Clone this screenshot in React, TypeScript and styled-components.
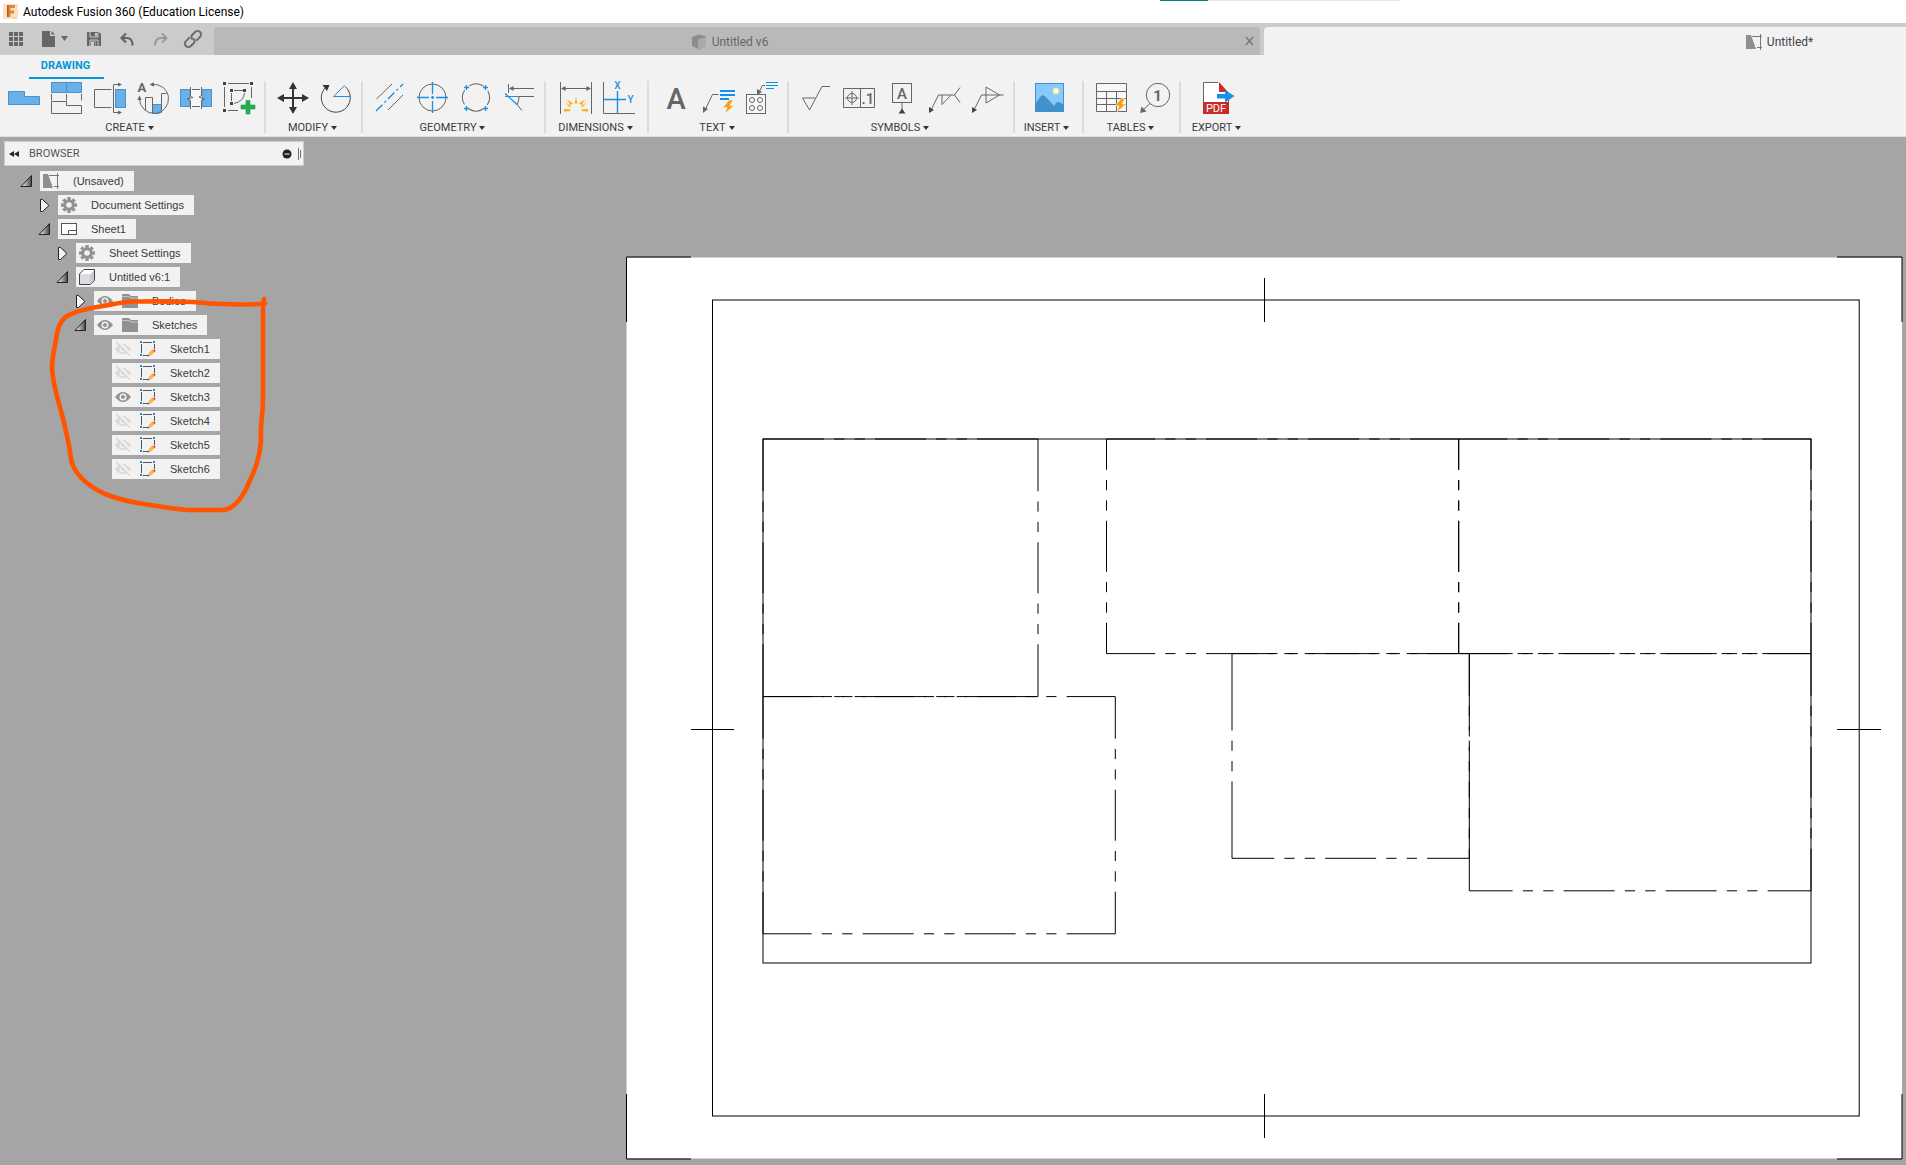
import React from "react";
import styled, { createGlobalStyle } from "styled-components";

const UI_FONT = `Roboto, "Liberation Sans", sans-serif`;
const TREE_FONT = `"Liberation Sans", Arial, sans-serif`;

const GlobalStyle = createGlobalStyle`
  * { box-sizing: border-box; }
  body { margin: 0; background: #a5a5a5; font-family: ${UI_FONT}; color: #3c3c3c; overflow: hidden; }
  button { border: 0; margin: 0; padding: 0; background: none; font: inherit; color: inherit; cursor: pointer; }
  ul { list-style: none; margin: 0; padding: 0; }
  h1, h2 { margin: 0; font-weight: 400; }
  svg { display: block; overflow: visible; }
`;

const Page = styled.div`
  display: flex;
  flex-direction: column;
  min-height: 100vh;
`;

const TitleBar = styled.header`
  position: relative;
  display: flex;
  align-items: center;
  gap: 4px;
  height: 23px;
  padding-left: 3px;
  background: #fff;
`;

const AppTitle = styled.h1`
  font-size: 12px;
  line-height: 16px;
  color: #000;
`;

const LoadStrip = styled.div`
  position: absolute;
  top: 0;
  left: calc(61% - 3px);
  width: 240px;
  height: 1px;
  background: linear-gradient(to right, #0e8080 20%, #e5e5e5 20%);
`;

const QuickBar = styled.div`
  display: flex;
  height: 32px;
  background: #cbcbcb;
`;

const QuickTools = styled.div`
  display: flex;
  flex: none;
  align-items: center;
  width: 214px;
  padding-left: 8px;
`;

const QuickButton = styled.button<{ $width: number }>`
  display: flex;
  align-items: center;
  width: ${(p) => p.$width}px;
  height: 20px;
`;

const Tabs = styled.div`
  display: flex;
  flex: 1;
  gap: 4px;
  min-width: 0;
  padding-top: 4px;
  overflow: hidden;
`;

const Tab = styled.div<{ $active?: boolean }>`
  display: flex;
  flex: 0 0 calc(62% - 3px);
  align-items: center;
  padding-right: 5px;
  border-radius: 4px 4px 0 0;
  background: ${(p) => (p.$active ? "#f2f2f2" : "#b9b9b9")};
`;

const TabName = styled.button<{ $active?: boolean }>`
  display: flex;
  flex: 1;
  align-items: center;
  justify-content: center;
  gap: 5px;
  height: 28px;
  padding-top: 1px;
  font-size: 12px;
  color: ${(p) => (p.$active ? "#444" : "#666")};
`;

const TabClose = styled.button`
  width: 10px;
  height: 16px;
`;

const Ribbon = styled.section`
  display: flex;
  flex-direction: column;
  height: 82px;
  background: #f2f2f2;
  border-bottom: 1px solid #dcdfdf;
`;

const RibbonTab = styled.button`
  width: 75px;
  height: 24px;
  margin-left: 29px;
  padding-right: 2px;
  border-bottom: 2px solid #0696d7;
  font-size: 11px;
  font-weight: 700;
  line-height: 22px;
  color: #0696d7;
`;

const Groups = styled.div`
  display: flex;
  height: 54px;
  padding-top: 2px;
`;

const Group = styled.div<{ $width?: number; $first?: boolean; $tight?: boolean }>`
  display: flex;
  flex-direction: column;
  align-items: center;
  min-width: ${(p) => p.$width ?? 0}px;
  height: 52px;
  padding: ${(p) => (p.$tight ? "0 8px" : p.$first ? "0 9px 0 8px" : "0 9px 0 11px")};
  border-right: 2px solid #dcdcdc;
  &:last-child { border-right: 0; }
`;

const GroupIcons = styled.div`
  display: flex;
  gap: 11px;
  padding-top: 1px;
`;

const Tool = styled.button`
  width: 32px;
  height: 32px;
`;

const GroupLabel = styled.button`
  display: flex;
  align-items: center;
  gap: 3px;
  padding-right: 4px;
  margin-top: 6px;
  font-size: 11px;
  line-height: 16px;
  white-space: nowrap;
  color: #3c3c3c;
`;

const Caret = styled.span`
  border: 3px solid transparent;
  border-top: 4px solid #333;
  border-bottom: 0;
`;

const Workspace = styled.main`
  position: relative;
  display: grid;
  flex: 1;
  grid-template-columns: minmax(304px, 624px) 1fr;
  align-items: start;
  background: #a5a5a5;
`;

const BrowserPanel = styled.aside`
  width: 304px;
  padding: 4px 0 0 4px;
`;

const BrowserHeader = styled.div`
  display: flex;
  align-items: center;
  height: 25px;
  padding: 0 1px 0 4px;
  background: #f2f2f2;
  border: 1px solid #cdcdcd;
`;

const BrowserTitle = styled.h2`
  flex: 1;
  padding-left: 10px;
  font-size: 11px;
  line-height: 16px;
  color: #555;
`;

const HeaderButton = styled.button`
  display: flex;
  padding: 0 0 0 6px;
  &:first-child { padding: 0; }
`;

const TreeList = styled.ul`
  display: flex;
  flex-direction: column;
  gap: 4px;
  padding-top: 5px;
`;

const TreeRow = styled.li<{ $depth: number }>`
  display: flex;
  height: 20px;
  padding-left: ${(p) => 12 + p.$depth * 18}px;
`;

const Twisty = styled.button`
  display: flex;
  align-items: center;
  width: 24px;
`;

const Chip = styled.div`
  display: flex;
  align-items: center;
  gap: 9px;
  padding: 0 10px 0 3px;
  background: #f2f2f2;
`;

const IconButton = styled.button`
  width: 16px;
  height: 16px;
`;

const NodeLabel = styled.button`
  display: flex;
  align-items: center;
  gap: 14px;
  height: 20px;
  font-family: ${TREE_FONT};
  font-size: 11px;
  line-height: 20px;
  color: #3a3a3a;
  white-space: nowrap;
`;

const Canvas = styled.div`
  padding-top: 119px;
  svg { width: 100%; height: auto; }
`;

const Markup = styled.svg`
  position: absolute;
  top: 153px;
  left: 48px;
  pointer-events: none;
`;

/* ---------- icons ---------- */

const G = "#666";
const B = "#1a8fe3";

const Svg = ({ w = 32, h = w, children }: { w?: number; h?: number; children: React.ReactNode }) => (
  <svg width={w} height={h} viewBox={`0 0 ${w} ${h}`} fill="none" stroke={G} aria-hidden="true">
    {children}
  </svg>
);

const Bolt = ({ x, y }: { x: number; y: number }) => (
  <path
    transform={`translate(${x} ${y})`}
    d="M6 0L0 7.5H4L2 13.5L11 5.5H7L10 0Z"
    fill="#f9a010"
    stroke="#f2f2f2"
    strokeWidth=".6"
  />
);

const icons: Record<string, React.ReactNode> = {
  baseView: <path d="M.5 9.5H16.5V14.5H31.5V22.5H.5Z" fill="#69b0e8" stroke="#4b90c6" />,
  projected: (
    <>
      <path d="M.5.5H30.5V10.5H.5ZM15.5.5V10.5" fill="#69b0e8" stroke="#4b90c6" />
      <path d="M.5 12V18.5M15.5 12V18.5M30.5 12V18.5M.5 19.5H15.5V23.5H30.5V31.5H.5Z" />
    </>
  ),
  section: (
    <>
      <path d="M17.5 7.5H.5V25.5H17.5M25 2.5H19.5V30.5H25" />
      <path d="M24 .5L28 2.5L24 4.5ZM24 28.5L28 30.5L24 32.5Z" fill={G} stroke="none" />
      <rect x="21.5" y="7.5" width="10" height="18" fill="#69b0e8" stroke="#4b90c6" />
    </>
  ),
  detail: (
    <>
      <text x="0.5" y="10" fontFamily={UI_FONT} fontWeight="700" fontSize="13" fill={G} stroke="none">A</text>
      <path d="M15.5 22.5H24.5V30.5Q20 32.5 15.5 31Z" fill="#69b0e8" stroke="#4b90c6" />
      <path d="M15 2.5A14.5 14.5 0 1 1 2.5 17M8.5 28V15.5H15.5V31.5M24.5 30V11.5H29.5" />
      <path d="M12.5 2.5L17 .3V4.7ZM2.5 13.5L.3 18H4.7Z" fill={G} stroke="none" />
    </>
  ),
  breakView: (
    <>
      <path d="M.5 7.5H10V15L8 17L10 19V24.5H.5ZM31.5 7.5H22V24.5H31.5Z" fill="#69b0e8" stroke="#4b90c6" />
      <path d="M10.5 7.5H21.5V24.5H10.5Z" fill="#f7f7f7" stroke="none" />
      <path d="M12 7.5H20M12 24.5H20" />
      <path d="M10.5 5V14.5L13 15.5L7.5 17L10.5 18.5V27M21.5 5V13.5L19 15L24.5 17L21.5 18.5V27" />
    </>
  ),
  sketch: (
    <>
      <path d="M5 1.5H26M1.5 5V25M28.5 5V16M5 28.5H15M11 8.5H20M8.5 11V19M21.5 11Q21 19 11 21.5" />
      <path d="M0 0H3V3H0ZM27 0H30V3H27ZM0 27H3V30H0ZM7 7H10V10H7ZM20 7H23V10H20ZM7 20H10V23H7Z" fill="#444" stroke="none" />
      <path d="M23 18.5H27V23H32V27H27V32H23V27H18V23H23Z" fill="#22b050" stroke="#1a9a44" strokeWidth=".6" />
    </>
  ),
  move: (
    <>
      <path d="M16 5V27M5 16H27" stroke="#333" strokeWidth="2" />
      <path d="M16 0L20 7H12ZM16 32L20 25H12ZM0 16L7 12V20ZM32 16L25 12V20Z" fill="#333" stroke="none" />
    </>
  ),
  rotate: (
    <>
      <path d="M25 4.5A14.5 14.5 0 1 1 6 5" stroke="#444" />
      <path d="M2.5 3H9.5L7 9Z" fill="#333" stroke="none" />
      <path d="M24.5 3.5L13.5 14.5H31" stroke={B} />
    </>
  ),
  centerline: (
    <>
      <path d="M2.5 17L18 2M14 28L29 13" />
      <path d="M2 29L29 2" stroke={B} strokeWidth="1.4" strokeDasharray="9 3 2 3" />
    </>
  ),
  centermark: (
    <>
      <circle cx="15.5" cy="15.5" r="13.5" />
      <path d="M15.5 0V12M15.5 14V17M15.5 19V31M0 15.5H12M14 15.5H17M19 15.5H31" stroke={B} strokeWidth="1.3" />
    </>
  ),
  centerPattern: (
    <>
      <circle cx="16" cy="15.5" r="13.5" strokeDasharray="14.7 6.5" strokeDashoffset="-3.25" transform="rotate(45 16 15.5)" />
      <path d="M4 5.5H9M6.5 3V8M23 5.5H28M25.5 3V8M4 26.5H9M6.5 24V29M23 26.5H28M25.5 24V29" stroke={B} strokeWidth="1.3" />
    </>
  ),
  edgeExt: (
    <>
      <path d="M5.5 2V11M7 6.5H31M14 14.5H31M14 22.5L19 28.5M16 15Q16 19 14 23" />
      <path d="M6 6.5L10.5 4V9Z" fill={G} stroke="none" />
      <path d="M2 14.5H15M2 11.5L14 22.5" stroke={B} strokeWidth="1.2" />
    </>
  ),
  dimension: (
    <>
      <path d="M.5 0V32M31.5 0V32M3 6.5H29" />
      <path d="M1 6.5L5.5 4V9ZM31 6.5L26.5 4V9Z" fill={G} stroke="none" />
      <path d="M16 15L14.500 21.500H17.500ZM7 17.500L10.500 23L13 21.500ZM25 17.500L21.500 23L19 21.500ZM4 27V29.500L10.500 29V27.500ZM28 27V29.500L21.500 29V27.500ZM5 20L10 25.500L11 24ZM27 20L22 25.500L21 24Z" fill="#ffae00" stroke="none" />
    </>
  ),
  ordinate: (
    <>
      <path d="M.5 0V31.5H32" />
      <path d="M14.5 9V31M1 17.5H23" stroke={B} strokeWidth="1.4" />
      <text x="14.5" y="7" textAnchor="middle" fontFamily={UI_FONT} fontWeight="500" fontSize="10" fill={B} stroke="none">X</text>
      <text x="27.5" y="20.5" textAnchor="middle" fontFamily={UI_FONT} fontWeight="500" fontSize="10" fill={B} stroke="none">Y</text>
    </>
  ),
  text: (
    <text x="16" y="27" textAnchor="middle" fontFamily={UI_FONT} fontWeight="500" fontSize="29" fill={G} stroke="none">A</text>
  ),
  leader: (
    <>
      <path d="M2 28L9.5 12.5H15.5" />
      <path d="M0 31V24.5L5 27Z" fill={G} stroke="none" />
      <path d="M17 9H32M17 13H32M17 17H26" stroke="#1290f0" strokeWidth="2" />
      <Bolt x={20} y={18} />
    </>
  ),
  holeNote: (
    <>
      <rect x=".5" y="12.5" width="19" height="19" fill="#f7f7f7" />
      <circle cx="6" cy="18" r="2.5" /><circle cx="14" cy="18" r="2.5" />
      <circle cx="6" cy="26" r="2.5" /><circle cx="14" cy="26" r="2.5" />
      <path d="M13 10L16.5 3.5H19" />
      <path d="M11 13V7L16 10Z" fill={G} stroke="none" />
      <path d="M20 .5H32M20 3.5H32M20 6.5H28" stroke="#0696d7" />
    </>
  ),
  surface: <path d="M15 16H2.5L9.5 28L22 4.5H30" />,
  frame: (
    <>
      <path d="M.5 6.5H31.5V25.5H.5ZM17.5 6.5V25.5M9 9V23M2 16H16" />
      <circle cx="9" cy="16" r="4.5" />
      <text x="18.5" y="22" fontFamily={UI_FONT} fontWeight="500" fontSize="15" fill={G} stroke="none">.1</text>
    </>
  ),
  datum: (
    <>
      <rect x="6.5" y="1.5" width="19" height="19" />
      <text x="16" y="17" textAnchor="middle" fontFamily={UI_FONT} fontWeight="500" fontSize="15" fill={G} stroke="none">A</text>
      <path d="M16 20.5V28" />
      <path d="M12.5 31.5L16 26.5L19.5 31.5Z" fill="#444" stroke="none" />
    </>
  ),
  weld: (
    <>
      <path d="M2 28L9.5 13H25.5L31 5.5M25.5 13L31 20.5M13 13V22.5L22 13" />
      <path d="M0 31V25L5 28Z" fill="#444" stroke="none" />
    </>
  ),
  taper: (
    <>
      <path d="M2 28L9.5 13H31.5M14 5V21L27.5 13Z" />
      <path d="M0 31V25L5 28Z" fill="#444" stroke="none" />
    </>
  ),
  image: (
    <>
      <rect x="2.5" y="1.5" width="28" height="28" fill="#87cbfd" stroke="#4192cc" />
      <path d="M2 22L8 14Q10 12 13 15L21 24L23 21Q26 18 30.5 23V29.5H2Z" fill="#4192cc" stroke="none" />
      <circle cx="23" cy="9" r="3" fill="#ffffd2" stroke="#f5e79a" />
    </>
  ),
  table: (
    <>
      <path d="M1.5 1.5H31.5V29.5H1.5ZM1.5 9.5H31.5M1.5 16.5H31.5M1.5 22.5H31.5M11.5 9.5V29.5M21.5 9.5V29.5" fill="#f7f7f7" />
      <Bolt x={20} y={16.5} />
    </>
  ),
  balloon: (
    <>
      <circle cx="20" cy="13" r="11.7" />
      <text x="19.5" y="18.5" textAnchor="middle" fontFamily={UI_FONT} fontWeight="700" fontSize="15" fill={G} stroke="none">1</text>
      <path d="M12 21.5L5 28" />
      <path d="M2 31L3.5 24.5L8.5 29.5Z" fill={G} stroke="none" />
    </>
  ),
  pdf: (
    <>
      <path d="M15 .5H.5V20.5H25.5V14" fill="#fff" />
      <path d="M16 0L25 10H16Z" fill="#cf2a2a" stroke="none" />
      <rect x="0" y="20" width="26" height="12" fill="#c92a2a" stroke="none" />
      <path d="M14 12H22V8L31.5 14L22 20.5V16.5H14Z" fill="#1a8fe3" stroke="none" />
      <text x="13" y="30" textAnchor="middle" fontFamily={UI_FONT} fontSize="11" fill="#fff" stroke="none">PDF</text>
    </>
  ),
};

const groups: { name: string; width?: number; tight?: boolean; tools: [string, string][] }[] = [
  { name: "CREATE", tools: [["baseView", "Base view"], ["projected", "Projected view"], ["section", "Section view"], ["detail", "Detail view"], ["breakView", "Break view"], ["sketch", "Create sketch"]] },
  { name: "MODIFY", tools: [["move", "Move"], ["rotate", "Rotate"]] },
  { name: "GEOMETRY", tools: [["centerline", "Centerline"], ["centermark", "Center mark"], ["centerPattern", "Center mark pattern"], ["edgeExt", "Edge extension"]] },
  { name: "DIMENSIONS", width: 103, tools: [["dimension", "Dimension"], ["ordinate", "Ordinate dimension"]] },
  { name: "TEXT", tools: [["text", "Text"], ["leader", "Leader"], ["holeNote", "Hole and thread note"]] },
  { name: "SYMBOLS", tools: [["surface", "Surface texture"], ["frame", "Feature control frame"], ["datum", "Datum identifier"], ["weld", "Welding"], ["taper", "Taper and slope"]] },
  { name: "INSERT", tight: true, width: 69, tools: [["image", "Insert image"]] },
  { name: "TABLES", tools: [["table", "Table"], ["balloon", "Balloon"]] },
  { name: "EXPORT", tight: true, width: 75, tools: [["pdf", "Export PDF"]] },
];

const DrawingIcon = () => (
  <Svg w={16}>
    <path d="M0 1H5L10 15H0Z" fill="#8d8f93" stroke="none" />
    <path d="M6 2.5H16M14.5 0V16M11 13.5H16" stroke="#777" />
  </Svg>
);

const CubeIcon = () => (
  <Svg w={16}>
    <path d="M1 3L8 .5L15 2.5V12L8 15.5L1 12Z" fill="#8c8c8c" stroke="none" />
    <path d="M7 5.5L15 3V12L7 15.5Z" fill="#a9a9a9" stroke="none" />
  </Svg>
);

const Eye = ({ off }: { off?: boolean }) => (
  <Svg w={16}>
    <g stroke="none" fill={off ? "#d9d9d9" : "#929292"}>
      <path d="M0 8Q8-2 16 8Q8 18 0 8Z" />
      <circle cx="8" cy="8" r="3.5" fill="#f2f2f2" />
      <circle cx="8" cy="8" r="2" />
    </g>
    {off && (
      <>
        <path d="M3 .5L16 13.5" stroke="#f2f2f2" strokeWidth="2" />
        <path d="M1.5 1.5L14.5 14.5" stroke="#d5d5d5" strokeWidth="1.5" />
      </>
    )}
  </Svg>
);

const gearTeeth = [0, 45, 90, 135, 180, 225, 270, 315];

const nodeIcons: Record<string, React.ReactNode> = {
  drawing: <DrawingIcon />,
  gear: (
    <Svg w={16}>
      <circle cx="8" cy="8" r="4.3" stroke="#929292" strokeWidth="3" />
      {gearTeeth.map((a) => (
        <rect key={a} x="6.3" y="0" width="3.4" height="4" fill="#929292" stroke="none" transform={`rotate(${a} 8 8)`} />
      ))}
    </Svg>
  ),
  sheet: (
    <Svg w={16}>
      <rect x=".5" y="2.5" width="15" height="11" fill="#fff" stroke="#555" />
      <path d="M7.5 13V9.5H15" stroke="#555" />
    </Svg>
  ),
  body: (
    <Svg w={16}>
      <path d="M.5 5L5 .5H15.5V11.5L11 15.5H.5Z" fill="#fff" stroke="#444" strokeLinejoin="round" />
      <path d="M1 5H11V15H1Z" fill="#dcdde2" stroke="none" />
      <path d="M11 5.5L15 1.5V11.5L11 15Z" fill="#c9cad0" stroke="none" />
    </Svg>
  ),
  folder: (
    <Svg w={16}>
      <path d="M0 1H7L9 3H16V15H0Z" fill="#929292" stroke="none" />
      <path d="M0 3.5H7L9 5H16" stroke="#c4c4c4" />
    </Svg>
  ),
  sketch: (
    <Svg w={16}>
      <path d="M3 1.5H12M1.5 3V12M14.5 3V8M3 14.5H8" stroke="#555" />
      <path d="M0 0H2V2H0ZM13 0H15V2H13ZM0 13H2V15H0Z" fill={B} stroke="none" />
      <path d="M9.5 13.5L14 9.5" stroke="#fcb53b" strokeWidth="3.5" />
      <path d="M13.5 9L15 10.5" stroke="#ef4444" strokeWidth="2" />
      <path d="M8 13L10 15L8 15.5Z" fill="#666" stroke="none" />
    </Svg>
  ),
};

type Node = { label: string; depth: number; icon: string; open?: boolean; eye?: "on" | "off" };

const nodes: Node[] = [
  { label: "(Unsaved)", depth: 0, icon: "drawing", open: true },
  { label: "Document Settings", depth: 1, icon: "gear", open: false },
  { label: "Sheet1", depth: 1, icon: "sheet", open: true },
  { label: "Sheet Settings", depth: 2, icon: "gear", open: false },
  { label: "Untitled v6:1", depth: 2, icon: "body", open: true },
  { label: "Bodies", depth: 3, icon: "folder", open: false, eye: "on" },
  { label: "Sketches", depth: 3, icon: "folder", open: true, eye: "on" },
  ...[1, 2, 3, 4, 5, 6].map((n): Node => ({
    label: `Sketch${n}`, depth: 4, icon: "sketch", eye: n === 3 ? "on" : "off",
  })),
];

const TwistyIcon = ({ open }: { open: boolean }) => (
  <Svg w={16} h={14}>
    <defs>
      <linearGradient id="twistyShade" x1="0" x2="1">
        <stop offset=".2" stopColor="#ddd" />
        <stop offset="1" stopColor="#444" />
      </linearGradient>
    </defs>
    {open ? (
      <path d="M5 12.5L15.5 1.5V12.5Z" fill="url(#twistyShade)" stroke="#222" />
    ) : (
      <path d="M6.500 1.500H8.500L15 7.500L8.500 13.500H6.500Z" fill="#f4f4f4" stroke="#222" />
    )}
  </Svg>
);

/* ---------- sheet drawing ---------- */

/* Phantom line: long dash, two short ones, balanced so both ends finish alike. */
function phantomDash(length: number) {
  const repeats = Math.floor((length - 2) / 102);
  const end = (length - 102 * repeats + 51) / 2;
  const dashes: number[] = [end];
  for (let i = 0; i < repeats; i++) {
    dashes.push(10.2, 10.2, 10.2, 10.2, 10.2, i === repeats - 1 ? end : 51);
  }
  return [...dashes, 0].join(" ");
}

const PhantomRect = ({ x1, y1, x2, y2 }: { x1: number; y1: number; x2: number; y2: number }) => (
  <>
    {[[x1, y1, x2, y1], [x1, y2, x2, y2], [x1, y1, x1, y2], [x2, y1, x2, y2]].map(([a, b, c, d], i) => (
      <line key={i} x1={a} y1={b} x2={c} y2={d} strokeDasharray={phantomDash(c - a + d - b)} />
    ))}
  </>
);

const parts = [
  { x1: 763, y1: 439, x2: 1038, y2: 696.6 },
  { x1: 763, y1: 696.6, x2: 1115.3, y2: 933.8 },
  { x1: 1106.5, y1: 439, x2: 1458.7, y2: 653.6 },
  { x1: 1458.7, y1: 439, x2: 1811, y2: 653.6 },
  { x1: 1232, y1: 653.6, x2: 1469.3, y2: 858.3 },
  { x1: 1469.3, y1: 653.6, x2: 1811, y2: 890.8 },
];

const SheetDrawing = () => (
  <svg viewBox="624 256 1282 909" fill="none" stroke="#000" role="img" aria-label="Sheet1">
    <rect x="626.5" y="257.5" width="1275.5" height="901" fill="#fff" stroke="none" />
    <path d="M691 257H626.5V322M1837 257H1902V322M626.5 1094V1159H691M1902 1094V1159H1837" />
    <rect x="712.5" y="300" width="1146.7" height="816" />
    <path d="M1264.5 278V322M1264.5 1094V1138M691 729.5H734M1837 729.5H1881" />
    <rect x="763" y="439" width="1048" height="524" />
    {parts.map((p, i) => <PhantomRect key={i} {...p} />)}
  </svg>
);

export default function App() {
  return (
    <Page>
      <GlobalStyle />
      <TitleBar>
        <Svg w={16}>
          <rect x="0" y="0" width="15" height="15" fill="#fbe0c6" stroke="none" />
          <path d="M4 1H12V4H7.500V6.500H11V9.500H7.500V13H4Z" fill="#e2873a" stroke="none" />
          <path d="M4 1H5.500V13H4Z" fill="#b55e1c" stroke="none" />
          <path d="M9 13.500H13" stroke="#f3c79c" />
        </Svg>
        <AppTitle>Autodesk Fusion 360 (Education License)</AppTitle>
        <LoadStrip />
      </TitleBar>

      <QuickBar>
        <QuickTools>
          <QuickButton $width={33} aria-label="Data panel">
            <Svg w={16}>
              <path d="M1 3H15M1 8H15M1 13H15" strokeWidth="4" strokeDasharray="4 1" />
            </Svg>
          </QuickButton>
          <QuickButton $width={46} aria-label="File">
            <Svg w={28} h={16}>
              <path d="M1 0H9V5H14V16H1Z" fill={G} stroke="none" />
              <path d="M10.5 0L14 3.5H10.5Z" fill={G} stroke="none" />
              <path d="M20 5H27L23.5 10Z" fill={G} stroke="none" />
            </Svg>
          </QuickButton>
          <QuickButton $width={33} aria-label="Save">
            <Svg w={16}>
              <path d="M0 1H12L14 3V15H0Z" fill={G} stroke="none" />
              <path d="M3 1V6H11V1M3 15V9H11V15" stroke="#cbcbcb" />
              <path d="M8 2H10V5H8ZM4 10.5H9V15H4Z" fill="#cbcbcb" stroke="none" />
              <path d="M7 11H8.5V15H7Z" fill={G} stroke="none" />
            </Svg>
          </QuickButton>
          <QuickButton $width={33} aria-label="Undo">
            <Svg w={16}>
              <path d="M3 7H7Q12.500 7 12.500 14.500" strokeWidth="2.200" />
              <path d="M6 2.500L1.500 7L6 11.500" strokeWidth="2.200" />
            </Svg>
          </QuickButton>
          <QuickButton $width={32} aria-label="Redo">
            <Svg w={16}>
              <g stroke="#999" strokeWidth="2">
                <path d="M12 7H8Q2 7 2 14.5" />
                <path d="M9 2.5L13.5 7L9 11.5" />
              </g>
            </Svg>
          </QuickButton>
          <QuickButton $width={20} aria-label="Link">
            <Svg w={16}>
              <g transform="rotate(-45 8 8)" stroke="#6d6d6d" strokeWidth="2">
                <path d="M7 4.5H1.5A3 3 0 0 0 1.5 11.5H5.5A3 3 0 0 0 8.5 8" />
                <path d="M9 11.5H14.5A3 3 0 0 0 14.5 4.5H10.5A3 3 0 0 0 7.5 8" />
              </g>
            </Svg>
          </QuickButton>
        </QuickTools>
        <Tabs>
          <Tab>
            <TabName><CubeIcon />Untitled v6</TabName>
            <TabClose aria-label="Close Untitled v6">
              <Svg w={10} h={16}><path d="M1 4L8 12M8 4L1 12" stroke="#777" strokeWidth="1.5" /></Svg>
            </TabClose>
          </Tab>
          <Tab $active>
            <TabName $active><DrawingIcon />Untitled*</TabName>
            <TabClose aria-label="Close Untitled" />
          </Tab>
        </Tabs>
      </QuickBar>

      <Ribbon>
        <RibbonTab>DRAWING</RibbonTab>
        <Groups>
          {groups.map((g, i) => (
            <Group key={g.name} $width={g.width} $first={i === 0} $tight={g.tight}>
              <GroupIcons>
                {g.tools.map(([icon, label]) => (
                  <Tool key={icon} aria-label={label}><Svg>{icons[icon]}</Svg></Tool>
                ))}
              </GroupIcons>
              <GroupLabel>{g.name}<Caret /></GroupLabel>
            </Group>
          ))}
        </Groups>
      </Ribbon>

      <Workspace>
        <BrowserPanel>
          <BrowserHeader>
            <HeaderButton aria-label="Collapse browser">
              <Svg w={10} h={8}><path d="M5 1V7L0 4ZM10 1V7L5 4Z" fill="#222" stroke="none" /></Svg>
            </HeaderButton>
            <BrowserTitle>BROWSER</BrowserTitle>
            <HeaderButton aria-label="Display options">
              <Svg w={10}><circle cx="5" cy="5" r="4.5" fill="#222" stroke="none" /><path d="M2.5 5H7.5" stroke="#fff" /></Svg>
            </HeaderButton>
            <HeaderButton aria-label="Resize browser">
              <Svg w={4} h={12}><path d="M.5 0V12M2.5 2V10" stroke="#777" /></Svg>
            </HeaderButton>
          </BrowserHeader>
          <TreeList>
            {nodes.map((n) => (
              <TreeRow key={n.label} $depth={n.depth}>
                <Twisty aria-label={`Toggle ${n.label}`} disabled={n.open === undefined}>
                  {n.open !== undefined && <TwistyIcon open={n.open} />}
                </Twisty>
                <Chip>
                  {n.eye && (
                    <IconButton aria-label={`Visibility of ${n.label}`} aria-pressed={n.eye === "on"}>
                      <Eye off={n.eye === "off"} />
                    </IconButton>
                  )}
                  <NodeLabel>{nodeIcons[n.icon]}{n.label}</NodeLabel>
                </Chip>
              </TreeRow>
            ))}
          </TreeList>
        </BrowserPanel>
        <Canvas><SheetDrawing /></Canvas>
        <Markup width="224" height="226" viewBox="48 290 224 226" fill="none" stroke="#ff5500" strokeWidth="4.6" strokeLinecap="round" strokeLinejoin="round" aria-hidden="true">
          <path d="M265 303.500C247 305.500 213 304 193 302C170 301 145 301.500 133 301.500C122 302 112 304.500 103 306C90 308 76 311 67 316C57 323 57 335 55 345C53 355 52 362 52 368C53 390 62 410 66 432C71 450 70 460 73 466C80 480 92 488 105 494C120 500 135 503 150 505C170 508 180 510 190 510H222C232 510 241 500 247 487C254 472 260 459 261 440C260 420 263 420 263 396V304L264 299" />
        </Markup>
      </Workspace>
    </Page>
  );
}
